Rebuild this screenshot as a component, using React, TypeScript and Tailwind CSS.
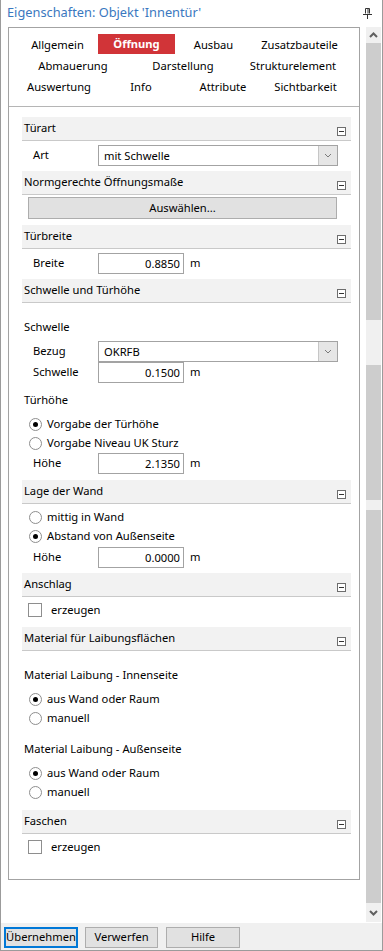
import React from "react";

const font = { fontFamily: "'Noto Sans', 'Open Sans', sans-serif" };

const MinusBox = () => (
  <div className="self-end mb-[4px] mr-[5px] w-[9px] h-[9px] border border-[#6d6d6d] bg-white flex items-center justify-center">
    <div className="w-[5px] h-[1px] bg-[#333]" />
  </div>
);

const Header = ({ title, className = "" }: { title: string; className?: string }) => (
  <div className={`h-[24px] flex justify-between bg-[#f2f2f2] border-b border-[#c9c9c9] ${className}`}>
    <span className="pl-[2px] leading-[22px]">{title}</span>
    <MinusBox />
  </div>
);

const Chevron = () => (
  <svg width="8" height="5" viewBox="0 0 8 5">
    <path d="M1 1 L4 4 L7 1" fill="none" stroke="#7a7a7a" strokeWidth="1" />
  </svg>
);

const Dropdown = ({ label, value, className = "" }: { label: string; value: string; className?: string }) => (
  <div className={`flex items-center ${className}`}>
    <span className="w-[76px] pl-[11px]">{label}</span>
    <div className="w-[240px] h-[21px] flex border border-[#a3a3a3] bg-white">
      <span className="flex-1 pl-[5px] leading-[19px]">{value}</span>
      <div className="w-[19px] border-l border-[#c6c6c6] bg-[#e6e6e6] flex items-center justify-center">
        <Chevron />
      </div>
    </div>
  </div>
);

const NumInput = ({ label, value, className = "" }: { label: string; value: string; className?: string }) => (
  <div className={`flex items-center ${className}`}>
    <span className="w-[76px] pl-[11px]">{label}</span>
    <div className="w-[86px] h-[21px] border border-[#a3a3a3] bg-white text-right pr-[3px] leading-[19px]">
      {value}
    </div>
    <span className="pl-[6px]">m</span>
  </div>
);

const Radio = ({ label, checked }: { label: string; checked?: boolean }) => (
  <div className="h-[19px] flex items-center pl-[7px]">
    <div className="w-[13px] h-[13px] rounded-full border border-[#8e8e8e] bg-white flex items-center justify-center">
      {checked && <div className="w-[5px] h-[5px] rounded-full bg-black" />}
    </div>
    <span className="pl-[5px]">{label}</span>
  </div>
);

const Check = ({ label, className = "" }: { label: string; className?: string }) => (
  <div className={`h-[20px] flex items-center pl-[6px] ${className}`}>
    <div className="w-[14px] h-[14px] border border-[#8e8e8e] bg-white" />
    <span className="pl-[9px]">{label}</span>
  </div>
);

const Tab = ({ label, w, className = "", active }: { label: string; w: string; className?: string; active?: boolean }) => (
  <div className={`${w} ${className} flex justify-center`}>
    {active ? (
      <div className="w-full h-[20px] bg-[#d13438] text-white font-bold flex items-center justify-center">
        {label}
      </div>
    ) : (
      <span className="leading-[21px]">{label}</span>
    )}
  </div>
);

const ScrollArrow = ({ up }: { up?: boolean }) => (
  <svg width="9" height="6" viewBox="0 0 9 6">
    <path d={up ? "M1 5 L4.5 1.5 L8 5" : "M1 1 L4.5 4.5 L8 1"} fill="none" stroke="#606060" strokeWidth="2" />
  </svg>
);

export default function App() {
  return (
    <div
      style={font}
      className="w-[383px] h-[951px] flex flex-col bg-white border-x border-b border-[#9b9b9b] text-[11.2px] text-black overflow-hidden"
    >
      {/* title bar */}
      <div className="h-[26px] flex items-center justify-between pl-[6px] pr-[10px]">
        <span className="text-[12.8px] text-[#3a78c0]">Eigenschaften: Objekt 'Innentür'</span>
        <svg width="9" height="11" viewBox="0 0 9 11">
          <path d="M2.5 0.5 H6.5 V5.5 M2.5 0.5 V5.5 M0 6.5 H9 M4.5 6.5 V11" fill="none" stroke="#333" strokeWidth="1" />
          <path d="M5 1 V5.5" stroke="#333" strokeWidth="1" />
        </svg>
      </div>

      {/* main */}
      <div className="h-[897px] flex pl-[7px] pt-[1px]">
        <div className="w-[352px] h-[853px] border border-[#a3a3a3] flex flex-col">
          {/* tabs */}
          <div className="pt-[6px] pb-[9px] border-b border-[#b5b5b5]">
            <div className="flex h-[21px]">
              <Tab label="Allgemein" w="w-[77px]" className="ml-[10px]" />
              <Tab label="Öffnung" w="w-[77px]" className="ml-[2px]" active />
              <Tab label="Ausbau" w="w-[77px]" />
              <Tab label="Zusatzbauteile" w="w-[77px]" className="ml-[9px]" />
            </div>
            <div className="flex h-[21px]">
              <Tab label="Abmauerung" w="w-[110px]" className="ml-[9px]" />
              <Tab label="Darstellung" w="w-[110px]" />
              <Tab label="Strukturelement" w="w-[110px]" />
            </div>
            <div className="flex h-[21px]">
              <Tab label="Auswertung" w="w-[82px]" className="ml-[9px]" />
              <Tab label="Info" w="w-[82px]" />
              <Tab label="Attribute" w="w-[82px]" />
              <Tab label="Sichtbarkeit" w="w-[83px]" />
            </div>
          </div>

          {/* sections */}
          <div className="ml-[13px] w-[329px] pt-[10px] flex flex-col">
            <Header title="Türart" />
            <Dropdown label="Art" value="mit Schwelle" className="mt-[4px]" />

            <Header title="Normgerechte Öffnungsmaße" className="mt-[5px]" />
            <div className="mt-[2px] ml-[6px] w-[309px] h-[22px] bg-[#e1e1e1] border border-[#adadad] flex items-center justify-center">
              Auswählen...
            </div>

            <Header title="Türbreite" className="mt-[6px]" />
            <NumInput label="Breite" value="0.8850" className="mt-[4px]" />

            <Header title="Schwelle und Türhöhe" className="mt-[5px]" />
            <div className="mt-[16px] h-[16px] leading-[16px] pl-[2px]">Schwelle</div>
            <Dropdown label="Bezug" value="OKRFB" className="mt-[6px]" />
            <NumInput label="Schwelle" value="0.1500" />
            <div className="mt-[9px] h-[16px] leading-[16px] pl-[2px]">Türhöhe</div>
            <div className="mt-[7px]">
              <Radio label="Vorgabe der Türhöhe" checked />
              <Radio label="Vorgabe Niveau UK Sturz" />
            </div>
            <NumInput label="Höhe" value="2.1350" />

            <Header title="Lage der Wand" className="mt-[6px]" />
            <div className="mt-[4px]">
              <Radio label="mittig in Wand" />
              <Radio label="Abstand von Außenseite" checked />
            </div>
            <NumInput label="Höhe" value="0.0000" className="mt-[1px]" />

            <Header title="Anschlag" className="mt-[5px]" />
            <Check label="erzeugen" className="mt-[3px]" />

            <Header title="Material für Laibungsflächen" className="mt-[7px]" />
            <div className="mt-[16px] h-[16px] leading-[16px] pl-[2px]">Material Laibung - Innenseite</div>
            <div className="mt-[7px]">
              <Radio label="aus Wand oder Raum" checked />
              <Radio label="manuell" />
            </div>
            <div className="mt-[13px] h-[16px] leading-[16px] pl-[2px]">Material Laibung - Außenseite</div>
            <div className="mt-[7px]">
              <Radio label="aus Wand oder Raum" checked />
              <Radio label="manuell" />
            </div>

            <Header title="Faschen" className="mt-[8px]" />
            <Check label="erzeugen" className="mt-[3px]" />
          </div>
        </div>

        {/* scrollbar */}
        <div className="ml-[6px] w-[15px] h-[895px] bg-[#f0f0f0] flex flex-col">
          <div className="h-[16px] flex items-center justify-center">
            <ScrollArrow up />
          </div>
          <div className="h-[277px] bg-[#cdcdcd]" />
          <div className="h-[45px]" />
          <div className="h-[135px] bg-[#cdcdcd]" />
          <div className="h-[10px]" />
          <div className="h-[393px] bg-[#cdcdcd]" />
          <div className="flex-1 flex items-center justify-center">
            <ScrollArrow />
          </div>
        </div>
      </div>

      {/* bottom bar */}
      <div className="flex-1 bg-[#f0f0f0] flex items-start pt-[4px] pl-[3px]">
        <div className="w-[74px] h-[21px] border-2 border-[#0078d7] bg-[#e1e1e1] flex items-center justify-center">
          Übernehmen
        </div>
        <div className="ml-[7px] w-[73px] h-[21px] border border-[#adadad] bg-[#e1e1e1] flex items-center justify-center">
          Verwerfen
        </div>
        <div className="ml-[8px] w-[74px] h-[21px] border border-[#adadad] bg-[#e1e1e1] flex items-center justify-center">
          Hilfe
        </div>
      </div>
    </div>
  );
}
